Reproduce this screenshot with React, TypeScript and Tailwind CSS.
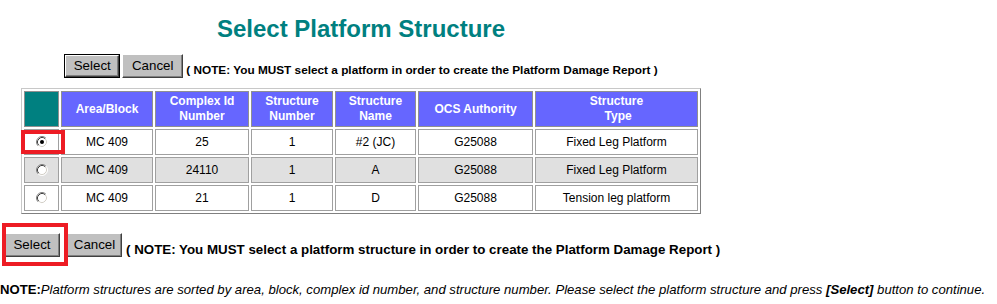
import React from "react";

function Radio({ checked }: { checked?: boolean }) {
  return (
    <svg width="12" height="12" viewBox="0 0 12 12" className="inline-block align-middle">
      <circle cx="6" cy="6" r="5" fill="#ffffff" />
      <path d="M2.11 9.89 A5.5 5.5 0 0 1 9.89 2.11" stroke="#808080" strokeWidth="1" fill="none" />
      <path d="M9.89 2.11 A5.5 5.5 0 0 1 2.11 9.89" stroke="#ffffff" strokeWidth="1" fill="none" />
      <path d="M2.82 9.18 A4.5 4.5 0 0 1 9.18 2.82" stroke="#404040" strokeWidth="1" fill="none" />
      <path d="M9.18 2.82 A4.5 4.5 0 0 1 2.82 9.18" stroke="#d4d0c8" strokeWidth="1" fill="none" />
      {checked && <circle cx="6" cy="6" r="2" fill="#000000" />}
    </svg>
  );
}

function Btn({ label, def, w }: { label: string; def?: boolean; w: string }) {
  const inner = (
    <span
      className={`flex h-full w-full items-center justify-center bg-[#c0c0c0] border border-t-white border-l-white border-r-[#404040] border-b-[#404040] shadow-[inset_-1px_-1px_0_#808080] text-[13.33px] leading-none text-black`}
    >
      {label}
    </span>
  );
  if (def) {
    return <span className={`${w} h-[24px] border border-black flex`}>{inner}</span>;
  }
  return <span className={`${w} h-[24px] flex`}>{inner}</span>;
}

const rows = [
  { sel: true, area: "MC 409", cid: "25", sn: "1", name: "#2 (JC)", ocs: "G25088", type: "Fixed Leg Platform", bg: "bg-white" },
  { sel: false, area: "MC 409", cid: "24110", sn: "1", name: "A", ocs: "G25088", type: "Fixed Leg Platform", bg: "bg-[#e0e0e0]" },
  { sel: false, area: "MC 409", cid: "21", sn: "1", name: "D", ocs: "G25088", type: "Tension leg platform", bg: "bg-white" },
];

const th = "p-0 border border-[#909090] bg-[#6666ff] text-white text-[12px] font-bold leading-[15px] text-center align-middle";
const td = "p-0 border border-[#a0a0a0] text-[12px] leading-[14px] text-center align-middle text-black h-[26px]";

export default function App() {
  return (
    <div className="relative w-[997px] h-[304px] bg-white font-['Liberation_Sans',Arial,sans-serif] text-black overflow-hidden">
      <div className="w-[722px] flex flex-col items-center">
        <h1 className="pt-[15px] text-[24px] font-bold leading-[28px] text-[#008080]">Select Platform Structure</h1>
        <div className="mt-[11px] flex items-end">
          <Btn label="Select" def w="w-[56px]" />
          <span className="ml-[2px]">
            <Btn label="Cancel" w="w-[61px]" />
          </span>
          <span className="ml-[3px] text-[11.8px] font-bold leading-[14px] mb-[1px]">
            ( NOTE: You MUST select a platform in order to create the Platform Damage Report )
          </span>
        </div>
        <table className="mt-[10px] border-separate border-spacing-[2px] border border-t-[#c8c8c8] border-l-[#c8c8c8] border-r-[#808080] border-b-[#808080]">
          <thead>
            <tr>
              <th className={`${th} w-[35px] h-[36px] bg-[#008080]`}></th>
              <th className={`${th} w-[92px]`}>Area/Block</th>
              <th className={`${th} w-[94px]`}>Complex Id<br />Number</th>
              <th className={`${th} w-[82px]`}>Structure<br />Number</th>
              <th className={`${th} w-[81px]`}>Structure<br />Name</th>
              <th className={`${th} w-[115px]`}>OCS Authority</th>
              <th className={`${th} w-[163px]`}>Structure<br />&nbsp;Type</th>
            </tr>
          </thead>
          <tbody>
            {rows.map((r, i) => (
              <tr key={i} className={r.bg}>
                <td className={td}>
                  <div className="flex items-center justify-center">
                    <Radio checked={r.sel} />
                  </div>
                </td>
                <td className={td}>{r.area}</td>
                <td className={td}>{r.cid}</td>
                <td className={td}>{r.sn}</td>
                <td className={td}>{r.name}</td>
                <td className={td}>{r.ocs}</td>
                <td className={td}>{r.type}</td>
              </tr>
            ))}
          </tbody>
        </table>
      </div>
      <div className="mt-[19px] flex items-end pl-[4px]">
        <Btn label="Select" w="w-[56px]" />
        <span className="ml-[7px]">
          <Btn label="Cancel" w="w-[55px]" />
        </span>
        <span className="ml-[4px] text-[13.33px] font-bold leading-[15px]">
          ( NOTE: You MUST select a platform structure in order to create the Platform Damage Report )
        </span>
      </div>
      <p className="mt-[25px] text-[13.13px] leading-[15px] whitespace-nowrap">
        <b>NOTE:</b>
        <i>
          Platform structures are sorted by area, block, complex id number, and structure number. Please select the platform structure and press <b>[Select]</b> button to continue.
        </i>
      </p>
      <div className="absolute left-[21px] top-[130px] w-[44px] h-[24px] border-4 border-[#ed1c24]"></div>
      <div className="absolute left-[2px] top-[223px] w-[66px] h-[43px] border-4 border-[#ed1c24]"></div>
    </div>
  );
}
